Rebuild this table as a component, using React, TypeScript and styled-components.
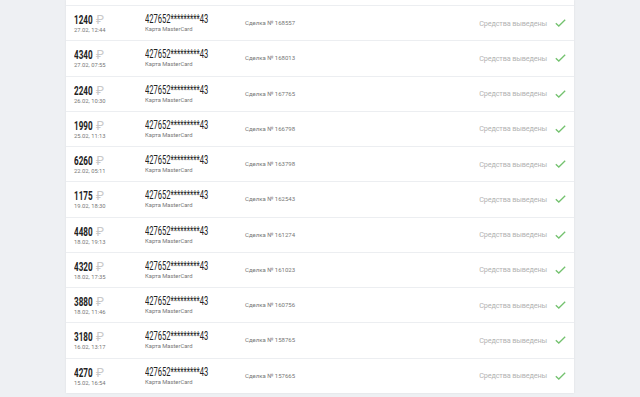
import styled, {createGlobalStyle} from "styled-components";

type Payout = {
    amount: number;
    date: string;
    deal: number;
};

const payouts: Payout[] = [
    {amount: 1240, date: "27.02, 12:44", deal: 168557},
    {amount: 4340, date: "27.02, 07:55", deal: 168013},
    {amount: 2240, date: "26.02, 10:30", deal: 167765},
    {amount: 1990, date: "25.02, 11:13", deal: 166798},
    {amount: 6260, date: "22.02, 05:11", deal: 163798},
    {amount: 1175, date: "19.02, 18:30", deal: 162543},
    {amount: 4480, date: "18.02, 19:13", deal: 161274},
    {amount: 4320, date: "18.02, 17:35", deal: 161023},
    {amount: 3880, date: "18.02, 11:46", deal: 160756},
    {amount: 3180, date: "16.02, 13:17", deal: 158765},
    {amount: 4270, date: "15.02, 16:54", deal: 157665},
];

export default function App() {
    return <>
        <GlobalStyle/>
        <Page>
            <Card>
                {payouts.map(p => (
                    <Row key={p.deal}>
                        <AmountCol>
                            <AmountLine>
                                <Amount>{p.amount}</Amount>
                                <Rub>₽</Rub>
                            </AmountLine>
                            <SmallText>{p.date}</SmallText>
                        </AmountCol>
                        <CardCol>
                            <CardNumber>427652*********43</CardNumber>
                            <SmallText>Карта MasterCard</SmallText>
                        </CardCol>
                        <Deal>Сделка № {p.deal}</Deal>
                        <Status>
                            Средства выведены
                            <CheckIcon/>
                        </Status>
                    </Row>
                ))}
            </Card>
        </Page>
    </>
}

const CheckIcon = () => (
    <svg width="11" height="8" viewBox="0 0 11 8">
        <polyline points="0.8,4.2 3.8,7 10.2,0.8" fill="none" stroke="#74c26f" strokeWidth="1.3"/>
    </svg>
);

const GlobalStyle = createGlobalStyle`
    html, body {
        margin: 0;
        padding: 0;
        background: #eef0f3;
        overflow: hidden;
    }
`;

const Page = styled.div`
    width: 640px;
    height: 397px;
    padding-left: 66px;
    box-sizing: border-box;
    font-family: Roboto, "Liberation Sans", sans-serif;
`;

const Card = styled.div`
    width: 508px;
    background: #fff;
    padding-top: 5px;
    box-shadow: 0 0 2px rgba(0, 0, 0, 0.08);
`;

const Row = styled.div`
    display: flex;
    align-items: center;
    height: 35.25px;
    box-sizing: border-box;
    border-top: 1px solid #eceef1;
    padding: 0 8px;
`;

const AmountCol = styled.div`
    display: flex;
    flex-direction: column;
    width: 71px;
    gap: 2px;
    margin-top: 1px;
`;

const CardCol = styled.div`
    display: flex;
    flex-direction: column;
    width: 100px;
    gap: 1px;
`;

const AmountLine = styled.div`
    display: flex;
    align-items: baseline;
    height: 12px;
`;

// number glyphs are narrow in the original, squeeze a regular face
const Amount = styled.span`
    display: inline-block;
    width: 22px;
    font-weight: 700;
    font-size: 13.5px;
    line-height: 12px;
    color: #222;
    white-space: nowrap;
    transform: scaleX(0.6);
    transform-origin: left;
`;

const Rub = styled.span`
    font-weight: 400;
    font-size: 12px;
    line-height: 12px;
    color: #c9c9c9;
`;

const CardNumber = styled.div`
    font-size: 12px;
    line-height: 12px;
    color: #222;
    white-space: nowrap;
    transform: scaleX(0.63);
    transform-origin: left;
`;

const SmallText = styled.div`
    font-size: 5.8px;
    line-height: 7px;
    color: #777;
    white-space: nowrap;
`;

const Deal = styled.div`
    font-size: 6px;
    color: #777;
    margin-bottom: 1px;
`;

const Status = styled.div`
    margin-left: auto;
    display: flex;
    align-items: center;
    gap: 8px;
    font-size: 7.3px;
    letter-spacing: -0.15px;
    color: #b3b3b3;
`;
